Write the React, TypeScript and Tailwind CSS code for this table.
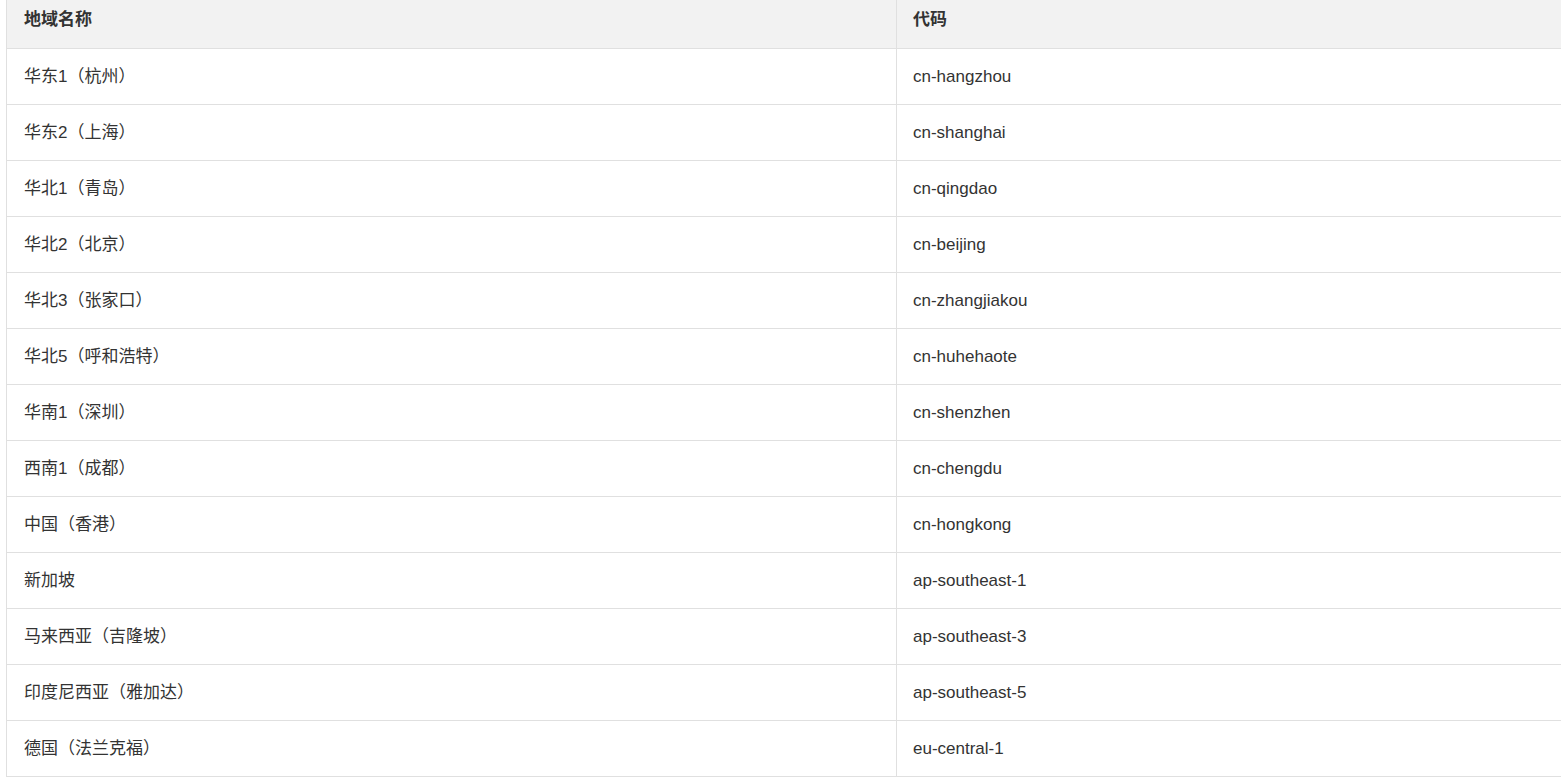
const rows: [string, string][] = [
  ["华东1（杭州）", "cn-hangzhou"],
  ["华东2（上海）", "cn-shanghai"],
  ["华北1（青岛）", "cn-qingdao"],
  ["华北2（北京）", "cn-beijing"],
  ["华北3（张家口）", "cn-zhangjiakou"],
  ["华北5（呼和浩特）", "cn-huhehaote"],
  ["华南1（深圳）", "cn-shenzhen"],
  ["西南1（成都）", "cn-chengdu"],
  ["中国（香港）", "cn-hongkong"],
  ["新加坡", "ap-southeast-1"],
  ["马来西亚（吉隆坡）", "ap-southeast-3"],
  ["印度尼西亚（雅加达）", "ap-southeast-5"],
  ["德国（法兰克福）", "eu-central-1"],
];

export default function App() {
  return (
    <div className="w-screen h-[778px] overflow-hidden bg-white text-[#333] font-['Liberation_Sans','Noto_Sans_CJK_SC',sans-serif] text-[17px]">
      <table className="ml-[6px] w-[1600px] border-collapse table-fixed">
        <colgroup>
          <col className="w-[890px]" />
          <col />
        </colgroup>
        <thead>
          <tr className="bg-[#f2f2f2] h-[48px]">
            <th className="border-l border-b border-[#e0e0e0] pl-[17px] pb-2 text-left font-bold align-middle">
              地域名称
            </th>
            <th className="border-l border-b border-[#e0e0e0] pl-[16px] pb-2 text-left font-bold align-middle">
              代码
            </th>
          </tr>
        </thead>
        <tbody>
          {rows.map(([name, code]) => (
            <tr key={code} className="h-[56px]">
              <td className="border-l border-b border-[#e0e0e0] pl-[17px] pt-[2px] align-middle">{name}</td>
              <td className="border-l border-b border-[#e0e0e0] pl-[16px] pt-[2px] align-middle">{code}</td>
            </tr>
          ))}
        </tbody>
      </table>
    </div>
  );
}
